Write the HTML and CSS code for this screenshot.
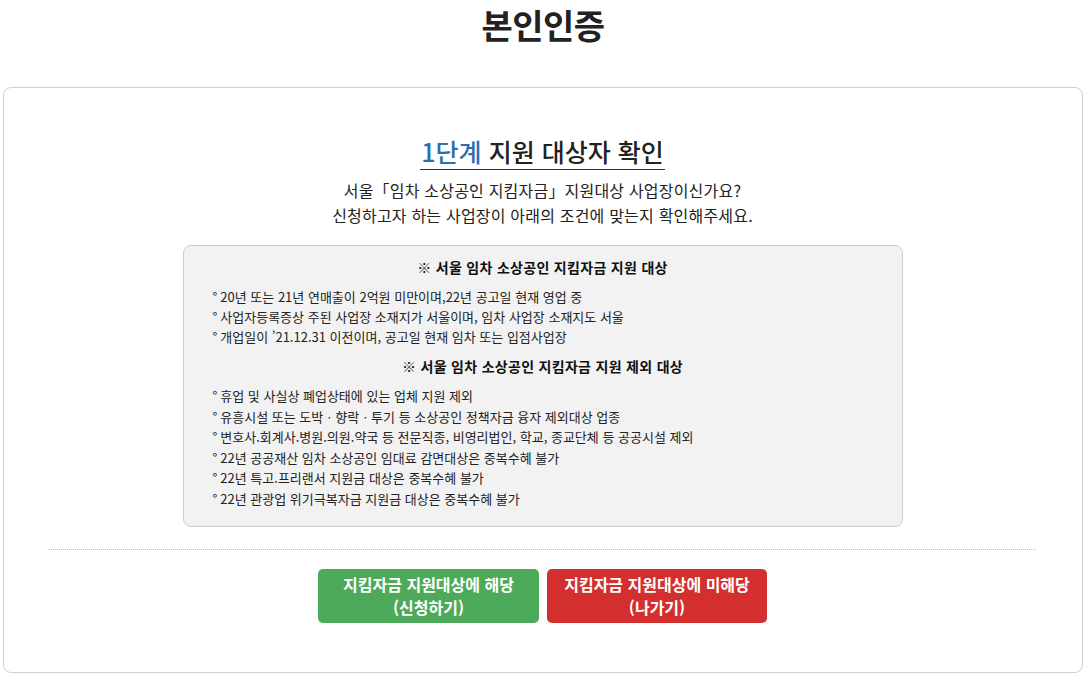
FILE: index.html
```html
<!DOCTYPE html>
<html lang="ko">
<head>
<meta charset="utf-8">
<title>본인인증</title>
<link rel="stylesheet" href="styles.css">
</head>
<body>
<h1 class="page-title">본인인증</h1>
<section class="card">
  <h2 class="step-title"><span class="step-num">1단계</span> 지원 대상자 확인</h2>
  <p class="lead">서울「임차 소상공인 지킴자금」지원대상 사업장이신가요?<br>신청하고자 하는 사업장이 아래의 조건에 맞는지 확인해주세요.</p>
  <div class="info-box">
    <h3 class="info-head">※ 서울 임차 소상공인 지킴자금 지원 대상</h3>
    <ul class="info-list">
      <li>20년 또는 21년 연매출이 2억원 미만이며,22년 공고일 현재 영업 중</li>
      <li>사업자등록증상 주된 사업장 소재지가 서울이며, 임차 사업장 소재지도 서울</li>
      <li>개업일이 ’21.12.31 이전이며, 공고일 현재 임차 또는 입점사업장</li>
    </ul>
    <h3 class="info-head second">※ 서울 임차 소상공인 지킴자금 지원 제외 대상</h3>
    <ul class="info-list loose">
      <li>휴업 및 사실상 폐업상태에 있는 업체 지원 제외</li>
      <li>유흥시설 또는 도박ㆍ향락ㆍ투기 등 소상공인 정책자금 융자 제외대상 업종</li>
      <li>변호사.회계사.병원.의원.약국 등 전문직종, 비영리법인, 학교, 종교단체 등 공공시설 제외</li>
      <li>22년 공공재산 임차 소상공인 임대료 감면대상은 중복수혜 불가</li>
      <li>22년 특고.프리랜서 지원금 대상은 중복수혜 불가</li>
      <li>22년 관광업 위기극복자금 지원금 대상은 중복수혜 불가</li>
    </ul>
  </div>
  <hr class="divider">
  <div class="actions">
    <button class="btn btn-yes" type="button">지킴자금 지원대상에 해당<br>(신청하기)</button>
    <button class="btn btn-no" type="button">지킴자금 지원대상에 미해당<br>(나가기)</button>
  </div>
</section>
</body>
</html>
```
FILE: styles.css
```css
* { box-sizing: border-box; }
html, body { margin: 0; padding: 0; background: #fff; }
body {
  font-family: "Noto Sans CJK KR", "Noto Sans", sans-serif;
  color: #222;
  padding: 0 3px 3px 3px;
}
.page-title {
  margin: 0;
  height: 87px;
  padding-top: 2px;
  text-align: center;
  font-size: 34px;
  font-weight: 700;
  line-height: 46px;
  color: #222;
  letter-spacing: -0.5px;
}
.card {
  border: 1px solid #cfcfd4;
  border-radius: 8px;
  padding: 42px 46px 47px 45px;
  display: flex;
  flex-direction: column;
  align-items: center;
  height: 586px;
}
.step-title {
  margin: 0;
  font-size: 25px;
  font-weight: 500;
  line-height: 36px;
  color: #222;
  border-bottom: 1px solid #333;
  padding: 3px 1px 0;
}
.step-num { color: #2f6db0; }
.lead {
  margin: 8px 0 0;
  text-align: center;
  font-size: 16px;
  line-height: 25px;
  letter-spacing: 0.2px;
  color: #222;
}
.info-box {
  margin-top: 17px;
  width: 720px;
  background: #f2f2f2;
  border: 1px solid #cccccc;
  border-radius: 8px;
  padding: 10px 16px 16px 29px;
}
.info-head {
  margin: 0;
  text-align: center;
  font-size: 14px;
  font-weight: 700;
  line-height: 22px;
  letter-spacing: 0.3px;
  color: #111;
  padding-right: 13px;
}
.info-head.second { margin-top: 8px; }
.info-list {
  list-style: none;
  margin: 9px 0 0;
  padding: 0;
  font-size: 13px;
  line-height: 20px;
  color: #222;
}
.info-list.loose li { line-height: 20.6px; }
.info-list li::before {
  content: "°";
  margin-right: 3px;
}
.divider {
  align-self: stretch;
  margin: 22px 0 0;
  border: 0;
  border-top: 1px dotted #bbb;
  height: 0;
}
.actions {
  margin-top: 19px;
  display: flex;
  gap: 8px;
}
.btn {
  width: 221px;
  height: 54px;
  border: 0;
  border-radius: 5px;
  color: #fff;
  font-family: inherit;
  font-size: 16px;
  font-weight: 700;
  line-height: 23px;
  padding: 0;
  cursor: pointer;
}
.btn-yes { background: #4caa5a; }
.btn-no { background: #d32f2f; width: 220px; }
```
